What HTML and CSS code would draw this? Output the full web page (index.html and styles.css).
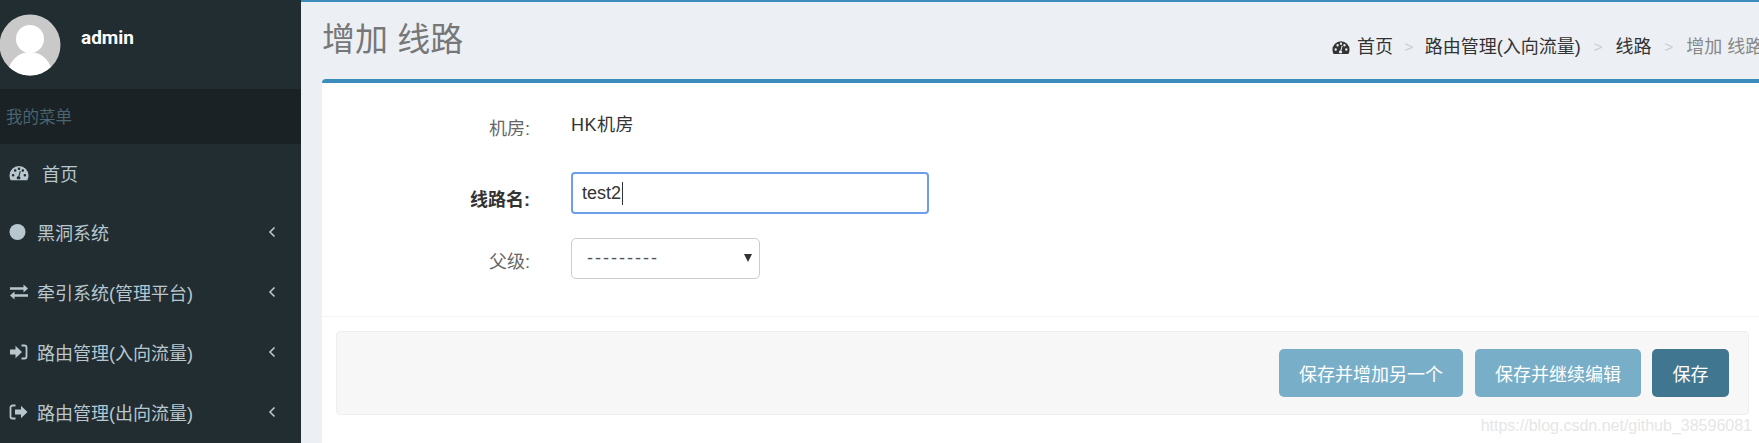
FILE: index.html
```html
<!DOCTYPE html>
<html lang="zh">
<head>
  <meta charset="UTF-8">
  <title>增加 线路</title>
  <link rel="stylesheet" href="styles.css">
</head>
<body>

<div class="wrapper">
  <!-- Menu lateral -->
  <aside class="sidebar">
    <div class="user-panel">
      <svg class="avatar" viewBox="0 0 62 62">
        <defs><clipPath id="avatarClip"><circle cx="31" cy="31" r="30.5"/></clipPath></defs>
        <circle cx="31" cy="31" r="30.5" fill="#c9c9c9"/>
        <g clip-path="url(#avatarClip)" fill="#fff">
          <circle cx="31" cy="25" r="14"/>
          <ellipse cx="31" cy="62" rx="22.5" ry="24"/>
        </g>
      </svg>
      <span class="user-name">admin</span>
    </div>
    <div class="menu-header">我的菜单</div>
    <ul class="menu">
      <li class="menu-item menu-home">
        <svg class="icon" viewBox="0 0 20 16"><path fill="currentColor" fill-rule="evenodd" d="M10 1a9.500 9.500 0 0 0-9.500 9.500c0 1.800.5 3.400 1.300 4.800h16.400c.8-1.400 1.300-3 1.300-4.800A9.500 9.500 0 0 0 10 1zM4.100 11.500a1.300 1.300 0 1 1 0-2.600 1.300 1.300 0 0 1 0 2.600zM6.200 6.800a1.300 1.300 0 1 1 0-2.600 1.300 1.300 0 0 1 0 2.600zM10 5a1.300 1.300 0 1 1 0-2.600A1.300 1.300 0 0 1 10 5zm1.700 9.300H8.300a1.700 1.700 0 0 1 1-3l1.500-5.400 1 .3-1.400 5.400a1.700 1.700 0 0 1 .3 2.700zM13.800 6.800a1.300 1.300 0 1 1 0-2.600 1.300 1.300 0 0 1 0 2.600zm2.100 4.700a1.300 1.300 0 1 1 0-2.600 1.300 1.300 0 0 1 0 2.600z"/></svg>
        <span>首页</span>
      </li>
      <li class="menu-item">
        <svg class="icon" viewBox="0 0 20 16"><circle cx="8.500" cy="8" r="8" fill="currentColor"/></svg>
        <span>黑洞系统</span>
        <svg class="chevron" viewBox="0 0 8 12"><path d="M6.500 1.500 2 6l4.500 4.500" fill="none" stroke="currentColor" stroke-width="1.600"/></svg>
      </li>
      <li class="menu-item">
        <svg class="icon" viewBox="0 0 20 16"><path fill="currentColor" d="M19 4.500 14.500.6v2.600H1v2.600h13.500v2.600zM1 11.500l4.500 3.900v-2.600H19v-2.600H5.500V7.600z"/></svg>
        <span>牵引系统(管理平台)</span>
        <svg class="chevron" viewBox="0 0 8 12"><path d="M6.500 1.500 2 6l4.500 4.500" fill="none" stroke="currentColor" stroke-width="1.600"/></svg>
      </li>
      <li class="menu-item">
        <svg class="icon" viewBox="0 0 20 16"><path fill="currentColor" d="M1 5.500h5.500V1.800L13 8l-6.500 6.200v-3.700H1z"/><path fill="none" stroke="currentColor" stroke-width="1.800" d="M12.500 1.500h3c1.200 0 2 .8 2 2v9c0 1.200-.8 2-2 2h-3"/></svg>
        <span>路由管理(入向流量)</span>
        <svg class="chevron" viewBox="0 0 8 12"><path d="M6.500 1.500 2 6l4.500 4.500" fill="none" stroke="currentColor" stroke-width="1.600"/></svg>
      </li>
      <li class="menu-item">
        <svg class="icon" viewBox="0 0 20 16"><path fill="none" stroke="currentColor" stroke-width="1.800" d="M6.500 1.500h-3c-1.200 0-2 .8-2 2v9c0 1.200.8 2 2 2h3"/><path fill="currentColor" d="M6 5.500h6V1.800L18.500 8 12 14.200v-3.700H6z"/></svg>
        <span>路由管理(出向流量)</span>
        <svg class="chevron" viewBox="0 0 8 12"><path d="M6.500 1.500 2 6l4.500 4.500" fill="none" stroke="currentColor" stroke-width="1.600"/></svg>
      </li>
    </ul>
  </aside>

  <!-- Contenido -->
  <main class="content">
    <div class="content-header">
      <h1 class="page-title">增加 线路</h1>
      <ol class="breadcrumb">
        <li class="crumb">
          <svg class="crumb-icon" viewBox="0 0 20 16"><path fill="currentColor" fill-rule="evenodd" d="M10 1a9.500 9.500 0 0 0-9.500 9.500c0 1.800.5 3.400 1.300 4.800h16.400c.8-1.400 1.300-3 1.300-4.800A9.500 9.500 0 0 0 10 1zM4.100 11.500a1.300 1.300 0 1 1 0-2.600 1.300 1.300 0 0 1 0 2.600zM6.200 6.800a1.300 1.300 0 1 1 0-2.600 1.300 1.300 0 0 1 0 2.600zM10 5a1.300 1.300 0 1 1 0-2.600A1.300 1.300 0 0 1 10 5zm1.700 9.300H8.300a1.700 1.700 0 0 1 1-3l1.500-5.400 1 .3-1.400 5.400a1.700 1.700 0 0 1 .3 2.700zM13.800 6.800a1.300 1.300 0 1 1 0-2.600 1.300 1.300 0 0 1 0 2.600zm2.100 4.700a1.300 1.300 0 1 1 0-2.600 1.300 1.300 0 0 1 0 2.600z"/></svg>
          首页
        </li>
        <li class="crumb-sep">&gt;</li>
        <li class="crumb">路由管理(入向流量)</li>
        <li class="crumb-sep crumb-sep-wide">&gt;</li>
        <li class="crumb">线路</li>
        <li class="crumb-sep crumb-sep-wide">&gt;</li>
        <li class="crumb crumb-active">增加 线路</li>
      </ol>
    </div>

    <div class="box">
      <div class="form-rows">
        <div class="form-row row-readonly">
          <label class="form-label">机房:</label>
          <div class="form-value">HK机房</div>
        </div>
        <div class="form-row row-name">
          <label class="form-label label-required" for="nombre">线路名:</label>
          <div class="input-wrap">
            <input class="text-input" id="nombre" type="text" value="test2">
            <span class="caret"></span>
          </div>
        </div>
        <div class="form-row row-parent">
          <label class="form-label" for="padre">父级:</label>
          <div class="select-wrap">
            <select class="select-input" id="padre">
              <option>---------</option>
            </select>
          </div>
        </div>
      </div>

      <div class="submit-row">
        <button class="btn">保存并增加另一个</button>
        <button class="btn">保存并继续编辑</button>
        <button class="btn btn-main">保存</button>
      </div>
      <div class="watermark">https://blog.csdn.net/github_38596081</div>
    </div>
  </main>
</div>

</body>
</html>
```

FILE: styles.css
```css
:root {
  --color-side: #222d32;
  --color-side-dark: #1a2226;
  --color-side-text: #b8c7ce;
  --color-blue: #3c8dbc;
  --color-text: #333;
}

html, body {
  height: 443px;
  margin: 0;
  overflow: hidden;
}

body {
  font-family: "Liberation Sans", "Noto Sans CJK SC", sans-serif;
  font-size: 18px;
  color: var(--color-text);
  background-color: #ecf0f5;
}

.wrapper {
  display: flex;
  width: 1759px;
  height: 443px;
}

/* Menu lateral */
.sidebar {
  flex: 0 0 301px;
  background-color: var(--color-side);
  color: var(--color-side-text);
}

.user-panel {
  display: flex;
  height: 89px;
  box-sizing: border-box;
  padding-top: 14px;
}

.avatar {
  width: 62px;
  height: 62px;
  margin-left: -1px;
}

.user-name {
  margin: 12px 0 0 20px;
  font-family: Roboto, "Liberation Sans", sans-serif;
  font-size: 19px;
  font-weight: 700;
  line-height: 24px;
  color: #fff;
}

.menu-header {
  height: 55px;
  padding-left: 6px;
  line-height: 57px;
  font-size: 16.500px;
  color: #4b646f;
  background-color: var(--color-side-dark);
}

.menu {
  list-style: none;
  margin: 0;
  padding: 0;
}

.menu-item {
  display: flex;
  align-items: center;
  height: 60px;
  padding-left: 9px;
  font-size: 18px;
}

.menu-home {
  height: 58px;
}

.menu-home span {
  margin-left: 5px;
}

.icon {
  flex: 0 0 20px;
  width: 20px;
  height: 16px;
  margin-right: 8px;
}

.chevron {
  width: 8px;
  height: 12px;
  margin-left: auto;
  margin-right: 25px;
}

/* Contenido */
.content {
  flex: 1;
  min-width: 0;
  border-top: 2px solid var(--color-blue);
}

.content-header {
  display: flex;
  height: 77px;
  padding-left: 21px;
}

.page-title {
  flex: 0 0 1010px;
  margin: 0;
  font-size: 33px;
  font-weight: 400;
  line-height: 76px;
  color: #777;
}

.breadcrumb {
  display: flex;
  flex: none;
  list-style: none;
  margin: 0;
  padding: 32px 0 0;
  line-height: 26px;
  white-space: nowrap;
}

.crumb-icon {
  width: 18px;
  height: 15px;
  margin-right: 2px;
  vertical-align: -2px;
}

.crumb-sep {
  padding: 0 11.500px;
  font-size: 15px;
  color: #ccc;
}

.crumb-sep-wide {
  padding: 0 13px;
}

.crumb-active {
  color: #888;
}

.box {
  box-sizing: border-box;
  height: 364px;
  margin-left: 21px;
  border-top: 4px solid var(--color-blue);
  border-top-left-radius: 4px;
  background-color: #fff;
  padding-right: 10px;
  position: relative;
}

.form-rows {
  height: 234px;
  box-sizing: border-box;
  border-bottom: 1px solid #f4f4f4;
  margin-right: -10px;
}

.form-row {
  display: flex;
  align-items: center;
  box-sizing: border-box;
}

.row-readonly {
  height: 74px;
  padding-top: 10px;
}

.row-name {
  height: 72px;
}

.row-parent {
  height: 58px;
}

.form-label {
  flex: 0 0 208px;
  text-align: right;
  font-size: 18px;
  color: #666;
  margin-top: 4px;
  margin-right: 41px;
}

.label-required {
  margin-top: 9px;
  font-weight: 700;
  color: #333;
}

.form-value {
  margin-top: -4px;
  font-size: 18px;
  letter-spacing: 0.500px;
}

.input-wrap {
  position: relative;
}

.text-input {
  display: block;
  box-sizing: border-box;
  width: 358px;
  height: 42px;
  padding: 0 9px;
  border: 2px solid #6d9eeb;
  border-radius: 4px;
  outline: none;
  font-family: inherit;
  font-size: 18px;
  color: var(--color-text);
}

.caret {
  position: absolute;
  left: 51px;
  top: 10px;
  width: 1px;
  height: 23px;
  background-color: #333;
}

.select-wrap {
  position: relative;
}

.select-wrap::after {
  content: "";
  position: absolute;
  right: 8px;
  top: 16px;
  border-left: 4px solid transparent;
  border-right: 4px solid transparent;
  border-top: 8px solid #333;
  pointer-events: none;
}

.select-input {
  display: block;
  appearance: none;
  box-sizing: border-box;
  width: 189px;
  height: 41px;
  padding: 0 15px;
  border: 1px solid #ccc;
  border-radius: 5px;
  background-color: #fff;
  font-family: inherit;
  font-size: 18px;
  letter-spacing: 2px;
  color: #555;
}

.submit-row {
  display: flex;
  justify-content: flex-end;
  gap: 12px;
  box-sizing: border-box;
  height: 84px;
  margin: 14px 0 0 14px;
  padding: 17px 19px 0 0;
  border: 1px solid #eee;
  border-radius: 4px;
  background-color: #f7f7f7;
}

.btn {
  height: 48px;
  padding: 0 20px;
  border: none;
  border-radius: 5px;
  background-color: #79aec8;
  color: #fff;
  font-family: inherit;
  font-size: 18px;
}

.btn-main {
  margin-left: -1px;
  padding: 0 20.500px;
  background-color: #417690;
}

.watermark {
  position: absolute;
  right: 7px;
  bottom: 8px;
  font-size: 16px;
  color: #e6e6e6;
}
```
